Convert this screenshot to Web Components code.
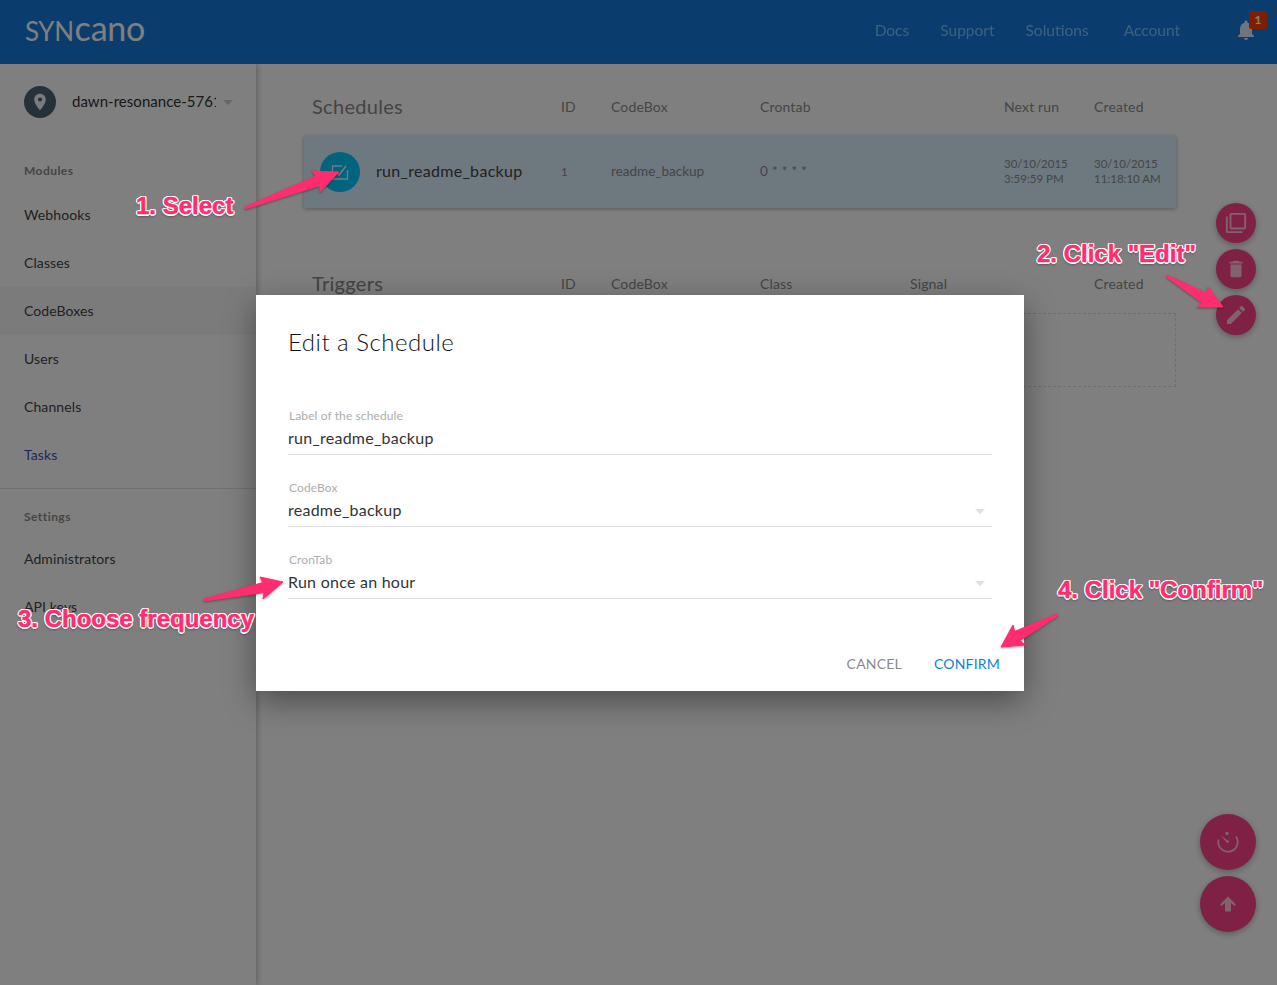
<!DOCTYPE html>
<html>
<head>
<meta charset="utf-8">
<title>Syncano</title>
<style>
  html, body { margin: 0; height: 985px; overflow: hidden; background: #fff; }
  body { font-family: Lato, "Open Sans", sans-serif; color: #444; }
</style>
</head>
<body>
<sy-app>
  <sy-topbar slot="top">
    <sy-toplink>Docs</sy-toplink>
    <sy-toplink gap="31">Support</sy-toplink>
    <sy-toplink gap="31">Solutions</sy-toplink>
    <sy-toplink gap="35">Account</sy-toplink>
  </sy-topbar>
  <sy-sidebar slot="side">
    <sy-side-head>dawn-resonance-5761</sy-side-head>
    <sy-side-title style="margin-bottom:10px">Modules</sy-side-title>
    <sy-side-item>Webhooks</sy-side-item>
    <sy-side-item>Classes</sy-side-item>
    <sy-side-item current>CodeBoxes</sy-side-item>
    <sy-side-item>Users</sy-side-item>
    <sy-side-item>Channels</sy-side-item>
    <sy-side-item active>Tasks</sy-side-item>
    <sy-side-sep></sy-side-sep>
    <sy-side-title style="margin-bottom:8px">Settings</sy-side-title>
    <sy-side-item>Administrators</sy-side-item>
    <sy-side-item>API keys</sy-side-item>
  </sy-sidebar>
  <sy-main slot="main">
    <sy-table-head title="Schedules" c2="ID" c3="CodeBox" c4="Crontab" c6="Next run" c7="Created"></sy-table-head>
    <sy-schedule-row name="run_readme_backup" rid="1" box="readme_backup" cron="0 * * * *"
      next1="30/10/2015" next2="3:59:59 PM" made1="30/10/2015" made2="11:18:10 AM"></sy-schedule-row>
    <sy-table-head style="margin-top:59px" title="Triggers" c2="ID" c3="CodeBox" c4="Class" c5="Signal" c7="Created"></sy-table-head>
    <sy-empty-box></sy-empty-box>
  </sy-main>
  <sy-fab size="40" x="1216" y="203" icon="copy" glyph="22"></sy-fab>
  <sy-fab size="40" x="1216" y="249" icon="trash" glyph="22"></sy-fab>
  <sy-fab size="40" x="1216" y="295" icon="edit" glyph="24"></sy-fab>
  <sy-fab size="56" x="1200" y="814" icon="timer" glyph="24"></sy-fab>
  <sy-fab size="56" x="1200" y="876" icon="up" glyph="24"></sy-fab>
</sy-app>

<sy-backdrop>
  <sy-dialog heading="Edit a Schedule">
    <sy-field label="Label of the schedule" value="run_readme_backup"></sy-field>
    <sy-field label="CodeBox" value="readme_backup" select></sy-field>
    <sy-field label="CronTab" value="Run once an hour" select></sy-field>
    <sy-button slot="actions">CANCEL</sy-button>
    <sy-button slot="actions" primary>CONFIRM</sy-button>
  </sy-dialog>
</sy-backdrop>

<sy-arrow tail="245,208" barb1="312,171" tip="339,172" barb2="320,192"></sy-arrow>
<sy-arrow tail="1167,276" barb1="1208,287" tip="1223,307" barb2="1197,307"></sy-arrow>
<sy-arrow tail="204,600" barb1="260,577" tip="283,582" barb2="263,599"></sy-arrow>
<sy-arrow tail="1057,615" barb1="1013,625" tip="1001,647" barb2="1025,645"></sy-arrow>
<sy-note x="136" y="191">1. Select</sy-note>
<sy-note x="1037" y="239">2. Click "Edit"</sy-note>
<sy-note x="18" y="604">3. Choose frequency</sy-note>
<sy-note x="1058" y="575">4. Click "Confirm"</sy-note>

<script>
function define(tag, styles, template) {
  customElements.define(tag, class extends HTMLElement {
    constructor() {
      super();
      this.attachShadow({ mode: "open" });
    }
    connectedCallback() {
      var get = (name, dflt) => this.hasAttribute(name) ? this.getAttribute(name) : (dflt === undefined ? "" : dflt);
      this.shadowRoot.innerHTML = `<style>${styles}</style>${template(get)}`;
    }
  });
}

const icons = {
  copy: '<path d="M3 5H1v16c0 1.1.9 2 2 2h16v-2H3V5zm18-4H7c-1.1 0-2 .9-2 2v14c0 1.1.9 2 2 2h14c1.1 0 2-.9 2-2V3c0-1.1-.9-2-2-2zm0 16H7V3h14v14z"/>',
  trash: '<path d="M6 19c0 1.1.9 2 2 2h8c1.1 0 2-.9 2-2V7H6v12zM19 4h-3.5l-1-1h-5l-1 1H5v2h14V4z"/>',
  edit: '<path d="M3 17.25V21h3.75L17.81 9.94l-3.75-3.75L3 17.25zM20.71 7.04a1 1 0 000-1.41l-2.34-2.34a1 1 0 00-1.41 0l-1.83 1.83 3.75 3.75 1.83-1.83z"/>',
  up: '<path d="M12 4.5L4 12.5l1.4 1.4L9 11v8.5h6V11l3.6 2.9 1.4-1.4z"/>',
  timer: '<path d="M2.6 9.5A9.7 9.7 0 1 0 20 6.6" fill="none" stroke="currentColor" stroke-width="1.7"/><circle cx="11" cy="3.5" r="1.7"/><path d="M4.6 5.2L13.3 11.6 11.6 13.3z"/>'
};

define("sy-app", `
  :host { display: grid; grid-template-columns: 256px 1fr; grid-template-rows: 64px 921px; width: 1277px; height: 985px; position: relative; overflow: hidden; }
  ::slotted([slot=top]) { grid-column: 1 / 3; }
`, () => `<slot name="top"></slot><slot name="side"></slot><slot name="main"></slot><slot></slot>`);

define("sy-topbar", `
  :host { display: flex; align-items: center; background: #1479dc; padding-left: 25px; padding-right: 4px; position: relative; z-index: 2; }
  .logo { font: 400 34px/1 Lato, sans-serif; color: #fff; display: flex; align-items: baseline; margin-top: -9px; }
  .caps { text-transform: uppercase; font-size: 26px; letter-spacing: -.4px; }
  .rest { letter-spacing: -.2px; margin-left: 1px; }
  nav { margin-left: auto; display: flex; align-items: center; height: 64px; }
  .bell { margin-left: 53px; width: 40px; height: 64px; position: relative; }
  .bell svg { position: absolute; left: 1px; top: 18px; width: 24px; height: 24px; fill: #fff; opacity: .85; }
  .badge { position: absolute; left: 16px; top: 11px; width: 18px; height: 18px; border-radius: 2px; background: #fd4000; color: #fff; font: 700 12px/18px Lato, sans-serif; text-align: center; }
`, () => `
  <div class="logo"><span class="caps">syn</span><span class="rest">cano</span></div>
  <nav><slot></slot>
    <div class="bell">
      <svg viewBox="0 0 24 24"><path d="M12 22c1.1 0 2-.9 2-2h-4c0 1.1.9 2 2 2zm6-6v-5c0-3.07-1.63-5.64-4.5-6.32V4a1.5 1.5 0 00-3 0v.68C7.64 5.36 6 7.92 6 11v5l-2 2v1h16v-1l-2-2z"/></svg>
      <div class="badge">1</div>
    </div>
  </nav>
`);

customElements.define("sy-toplink", class extends HTMLElement {
  constructor() {
    super();
    this.attachShadow({ mode: "open" });
  }
  connectedCallback() {
    var gap = this.getAttribute("gap") || 0;
    this.shadowRoot.innerHTML = `<style>
      :host { display: block; margin: 0 0 4px ${gap}px; font-size: 15.5px; color: #98d6ff; opacity: .78; }
    </style><slot></slot>`;
  }
});

define("sy-sidebar", `
  :host { display: block; background: #fff; box-shadow: 1px 0 6px rgba(0,0,0,.3); position: relative; z-index: 1; padding-top: 22px; box-sizing: border-box; }
`, () => `<slot></slot>`);

define("sy-side-head", `
  :host { display: flex; align-items: center; height: 32px; padding-left: 24px; margin-bottom: 43px; font-size: 15px; color: #333; }
  .pin { flex: none; width: 32px; height: 32px; border-radius: 50%; background: #4a6474; display: flex; align-items: center; justify-content: center; }
  svg { width: 20px; height: 20px; fill: #fff; opacity: .95; }
  .name { margin: -2px 0 0 16px; width: 144px; overflow: hidden; white-space: nowrap; letter-spacing: .03px; }
  .caret { margin-left: 7px; width: 0; height: 0; border: 5px solid transparent; border-top-color: #ccc; border-bottom: 0; }
`, () => `
  <div class="pin"><svg viewBox="0 0 24 24"><path d="M12 2C8.13 2 5 5.13 5 9c0 5.25 7 13 7 13s7-7.75 7-13c0-3.87-3.13-7-7-7zm0 9.5a2.5 2.5 0 010-5 2.5 2.5 0 010 5z"/></svg></div>
  <div class="name"><slot></slot></div>
  <div class="caret"></div>
`);

define("sy-side-title", `
  :host { display: block; height: 20px; padding-left: 24px; font: 700 12px/20px Lato, sans-serif; color: #8a8a8a; letter-spacing: .45px; }
`, () => `<slot></slot>`);

define("sy-side-item", `
  :host { display: block; height: 48px; padding-left: 24px; font-size: 14px; line-height: 48px; color: #444; letter-spacing: .1px; }
  :host([current]) { background: #f6f6f6; }
  :host([active]) { color: #3f51b5; }
`, () => `<slot></slot>`);

define("sy-side-sep", `
  :host { display: block; height: 1px; background: #e0e0e0; margin: 9px 0 18px; }
`, () => ``);

define("sy-main", `
  :host { display: block; padding: 26px 101px 0 48px; }
`, () => `<slot></slot>`);

const rowCols = "grid-template-columns: 249px 50px 149px 150px 94px 90px 1fr;";

define("sy-table-head", `
  :host { display: grid; ${rowCols} align-items: center; height: 32px; padding-left: 8px; font-size: 14px; color: #8b8b8b; letter-spacing: .15px; }
  .title { font-size: 20px; letter-spacing: .3px; color: #888; }
`, (get) => `
  <div class="title">${get("title")}</div><div>${get("c2")}</div><div>${get("c3")}</div>
  <div>${get("c4")}</div><div>${get("c5")}</div><div>${get("c6")}</div><div>${get("c7")}</div>
`);

define("sy-schedule-row", `
  :host { display: grid; ${rowCols} align-items: center; height: 72px; margin-top: 14px; padding-left: 8px; background: #dcf0ff; box-shadow: 0 1px 4px rgba(0,0,0,.3); font-size: 13.5px; color: #8b8b8b; }
  .first { display: flex; align-items: center; gap: 16px; margin: 0 -8px 0 8px; }
  .circle { flex: none; width: 40px; height: 40px; border-radius: 50%; background: #00c8ff; display: flex; align-items: center; justify-content: center; }
  svg { width: 22px; height: 22px; fill: none; stroke: #fff; stroke-width: 1.3; opacity: .9; }
  .name { font-size: 16px; color: #444; letter-spacing: .3px; margin-bottom: 3px; }
  .small { font-size: 11.5px; line-height: 15px; margin-bottom: 2px; }
  .cron { grid-column: 4 / 6; margin-bottom: 2px; letter-spacing: .3px; }
  .cell { margin-bottom: 2px; }
`, (get) => `
  <div class="first">
    <div class="circle"><svg viewBox="0 0 22 22"><path d="M13 5H3.5v13h15V9"/><path d="M7 11l3 3 7-9" stroke-width="1.6"/></svg></div>
    <div class="name">${get("name")}</div>
  </div>
  <div class="small">${get("rid")}</div>
  <div class="cell">${get("box")}</div>
  <div class="cron">${get("cron")}</div>
  <div class="small">${get("next1")}<br>${get("next2")}</div>
  <div class="small">${get("made1")}<br>${get("made2")}</div>
`);

define("sy-empty-box", `
  :host { display: block; height: 72px; margin-top: 14px; border: 1px dashed #ddd; }
`, () => ``);

define("sy-fab", `
  :host { position: absolute; border-radius: 50%; background: #fe4388; display: flex; align-items: center; justify-content: center; box-shadow: 0 2px 6px rgba(0,0,0,.3); color: #fff; }
  svg { fill: currentColor; opacity: .7; }
`, (get) => {
  return `<style>:host { left: ${get("x")}px; top: ${get("y")}px; width: ${get("size")}px; height: ${get("size")}px; }</style>
  <svg viewBox="0 0 24 24" width="${get("glyph")}" height="${get("glyph")}">${icons[get("icon")]}</svg>`;
});

define("sy-backdrop", `
  :host { position: absolute; left: 0; top: 0; width: 1277px; height: 985px; box-sizing: border-box; background: rgba(0,0,0,.5); padding: 295px 0 0 256px; z-index: 5; }
`, () => `<slot></slot>`);

define("sy-dialog", `
  :host { display: block; width: 768px; height: 396px; box-sizing: border-box; background: #fff; box-shadow: 0 10px 30px rgba(0,0,0,.4); padding: 31px 32px 0 32px; }
  h1 { margin: 0 0 39px; font: 300 24px/32px Lato, sans-serif; color: #111; letter-spacing: .5px; }
  .fields { display: grid; }
  .actions { display: flex; justify-content: flex-end; gap: 32px; margin: 41px -8px 0 0; }
`, (get) => `
  <h1>${get("heading")}</h1>
  <div class="fields"><slot></slot></div>
  <div class="actions"><slot name="actions"></slot></div>
`);

define("sy-field", `
  :host { display: block; height: 72px; box-sizing: border-box; padding-top: 11px; position: relative; }
  label { display: block; padding-left: 1px; font-size: 12px; line-height: 16px; color: #adadad; letter-spacing: .1px; }
  .value { margin-top: 1px; height: 30px; box-sizing: border-box; border-bottom: 1px solid #e0e0e0; font-size: 16px; line-height: 25px; color: #333; letter-spacing: .25px; display: flex; justify-content: space-between; }
  .caret { width: 0; height: 0; margin: 12px 7px 0 0; border: 5px solid transparent; border-top-color: #e0e0e0; border-bottom: 0; }
`, (get) => `
  <label>${get("label")}</label>
  <div class="value"><span>${get("value")}</span>${get("select", null) !== null ? '<span class="caret"></span>' : ""}</div>
`);

define("sy-button", `
  :host { display: block; font-size: 14px; line-height: 20px; color: #8a8a8a; letter-spacing: .2px; }
  :host([primary]) { color: #0e7fd8; }
`, () => `<slot></slot>`);

// tapered arrow: thin at the tail, swept barbs at the head
function arrowPoints(tail, b1, tip, b2) {
  var dx = tip[0] - tail[0], dy = tip[1] - tail[1];
  var len = Math.hypot(dx, dy);
  var nx = -dy / len, ny = dx / len;
  var mid = [(b1[0] + b2[0]) / 2, (b1[1] + b2[1]) / 2];
  var neck = (b) => [b[0] + (mid[0] - b[0]) * .55 + dx / len * 2, b[1] + (mid[1] - b[1]) * .55 + dy / len * 2];
  var n1 = neck(b1), n2 = neck(b2);
  var side = ((b1[0] - tail[0]) * nx + (b1[1] - tail[1]) * ny) > 0 ? 1 : -1;
  return [
    [tail[0] + nx * side, tail[1] + ny * side], n1, b1, tip, b2, n2,
    [tail[0] - nx * side, tail[1] - ny * side]
  ].map((p) => p[0].toFixed(1) + "," + p[1].toFixed(1)).join(" ");
}

define("sy-arrow", `
  :host { position: absolute; left: 0; top: 0; width: 1277px; height: 985px; z-index: 6; pointer-events: none; }
  svg { display: block; filter: drop-shadow(0 1px 1px rgba(0,0,0,.35)); }
`, (get) => {
  var pt = (name) => get(name).split(",").map(Number);
  return `<svg width="1277" height="985"><polygon points="${arrowPoints(pt("tail"), pt("barb1"), pt("tip"), pt("barb2"))}" fill="#ff2d6f" stroke="#ff2d6f" stroke-width="1" stroke-linejoin="round"/></svg>`;
});

define("sy-note", `
  :host { position: absolute; z-index: 7; white-space: nowrap; font: 700 24px/30px "Liberation Sans", sans-serif; color: #ff2d6f; -webkit-text-stroke: .5px #ff2d6f;
    text-shadow: 1.5px 0 0 #fff, -1.5px 0 0 #fff, 0 1.5px 0 #fff, 0 -1.5px 0 #fff, 1.1px 1.1px 0 #fff, -1.1px 1.1px 0 #fff, 1.1px -1.1px 0 #fff, -1.1px -1.1px 0 #fff, 0 2px 3px rgba(0,0,0,.6); }
`, (get) => `<style>:host { left: ${get("x")}px; top: ${get("y")}px; }</style><slot></slot>`);
</script>
</body>
</html>
